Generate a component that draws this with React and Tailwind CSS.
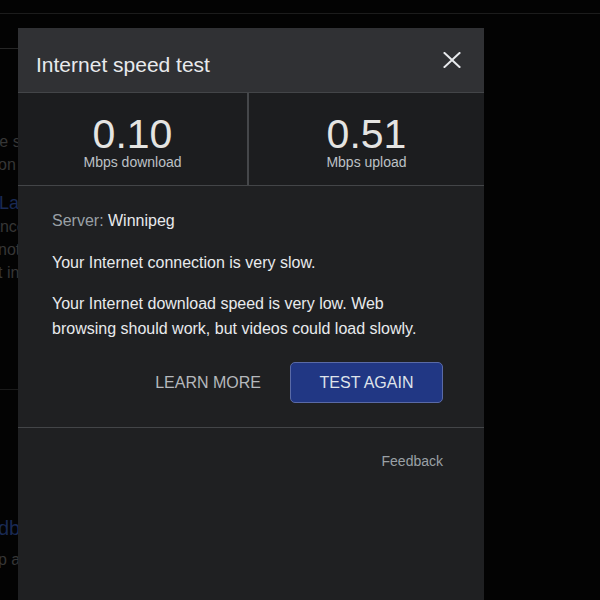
export default function App() {
  const font = { fontFamily: '"Liberation Sans", Arial, sans-serif' };
  return (
    <div className="relative w-[600px] h-[600px] overflow-hidden bg-[#030303]" style={font}>
      {/* dimmed page behind the dialog */}
      <div className="flex flex-col">
        <div className="h-[13px]" />
        <div className="h-px bg-[#1c1c1c]" />
        <div className="h-[34px]" />
        <div className="h-px w-[40px] bg-[#262626]" />
        <div className="h-[81px]" />
        <div className="flex flex-col text-[16px] leading-[23px] text-[#363636] whitespace-nowrap">
          <div className="-ml-[14px]">the speed</div>
          <div className="-ml-[2px]">on</div>
        </div>
        <div className="h-[15px]" />
        <div className="-ml-[1px] text-[18px] leading-[24px] text-[#1a2a54] whitespace-nowrap">Lab</div>
        <div className="flex flex-col text-[16px] leading-[23px] text-[#363636] whitespace-nowrap">
          <div className="-ml-[9px]">ance</div>
          <div className="-ml-[2px]">not</div>
          <div className="-ml-[2px]">t in</div>
        </div>
        <div className="h-[105px]" />
        <div className="h-px w-[40px] bg-[#1a1a1a]" />
        <div className="h-[125px]" />
        <div className="-ml-[2px] text-[20px] leading-[26px] text-[#1a2a54] whitespace-nowrap">db</div>
        <div className="h-[7px]" />
        <div className="-ml-[2px] text-[16px] leading-[23px] text-[#363636] whitespace-nowrap">p a</div>
      </div>

      {/* dialog */}
      <div className="absolute left-[18px] top-[28px] bottom-0 w-[466px] flex flex-col bg-[#1f2022]">
        <div className="h-[65px] flex items-start justify-between bg-[#303134] pl-[18px] pr-[23px] border-b border-[#434548]">
          <div className="mt-[25px] text-[21px] leading-[24px] text-[#e8eaed]">Internet speed test</div>
          <svg width="18" height="16" viewBox="0 0 18 16" className="mt-[24px] text-[#e8eaed]">
            <path d="M1.5 1 L16.5 15 M16.5 1 L1.5 15" stroke="currentColor" strokeWidth="2" strokeLinecap="square" />
          </svg>
        </div>
        <div className="h-[93px] grid grid-cols-[231px_1fr] bg-[#1c1d1f] border-b border-[#434548]">
          <div className="flex flex-col items-center pt-[22px] border-r-2 border-[#45474a]">
            <div className="text-[41px] leading-[39px] text-[#e4e4e2]">0.10</div>
            <div className="text-[14px] leading-[16px] text-[#bdc1c6]">Mbps download</div>
          </div>
          <div className="flex flex-col items-center pt-[22px]">
            <div className="text-[41px] leading-[39px] text-[#e4e4e2]">0.51</div>
            <div className="text-[14px] leading-[16px] text-[#bdc1c6]">Mbps upload</div>
          </div>
        </div>
        <div className="flex flex-col pl-[34px] pr-[41px] pt-[22px] text-[16px] leading-[25px] text-[#e8eaed]">
          <div>
            <span className="text-[#9aa0a6]">Server: </span>Winnipeg
          </div>
          <div className="mt-[17px]">Your Internet connection is very slow.</div>
          <div className="mt-[16px]">
            Your Internet download speed is very low. Web browsing should work, but videos could load slowly.
          </div>
          <div className="mt-[21px] flex items-center justify-end gap-[29px]">
            <div className="text-[16px] text-[#b5b8bc]">LEARN MORE</div>
            <div className="w-[153px] h-[41px] flex items-center justify-center rounded-[5px] bg-[#213784] border border-[#5a6aa6] text-[16px] text-[#dfe3ea]">
              TEST AGAIN
            </div>
          </div>
        </div>
        <div className="mt-[24px] h-px bg-[#434548]" />
        <div className="flex justify-end pr-[41px] pt-[23px]">
          <div className="text-[14px] leading-[20px] text-[#9aa0a6]">Feedback</div>
        </div>
      </div>
    </div>
  );
}
